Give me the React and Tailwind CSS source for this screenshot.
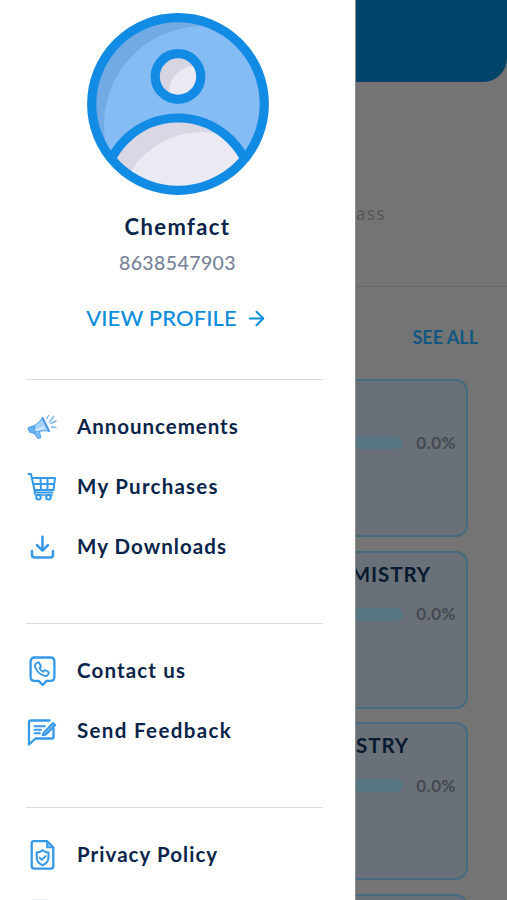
import React from 'react';
import { ArrowRight } from 'lucide-react';

const Avatar = () => (
    <svg viewBox="0 0 182 182" className="w-[182px] h-[182px]">
        <defs>
            <clipPath id="disc">
                <circle cx="91" cy="91" r="87" />
            </clipPath>
            <clipPath id="body">
                <circle cx="91" cy="179.5" r="72" />
            </clipPath>
            <clipPath id="head">
                <circle cx="91" cy="63.5" r="20" />
            </clipPath>
        </defs>
        <g clipPath="url(#disc)">
            <circle cx="91" cy="91" r="87" fill="#72abe3" />
            <circle cx="116" cy="112" r="99" fill="#85bcf3" />
            <g clipPath="url(#body)">
                <rect width="182" height="182" fill="#dad7e4" />
                <circle cx="115" cy="203" r="84" fill="#ebeaf2" />
            </g>
            <circle cx="91" cy="179.5" r="74.5" fill="none" stroke="#128be4" strokeWidth="9.2" />
        </g>
        <circle cx="91" cy="63.5" r="20" fill="#d7d5e2" />
        <circle cx="108" cy="79" r="26" fill="#ebeaf2" clipPath="url(#head)" />
        <circle cx="91" cy="63.5" r="22.8" fill="none" stroke="#128be4" strokeWidth="9.2" />
        <circle cx="91" cy="91" r="86.3" fill="none" stroke="#128be4" strokeWidth="9.2" />
    </svg>
);

const Icon = ({ children }) => (
    <svg viewBox="0 0 30 32" className="w-[30px] h-8 shrink-0" fill="none" stroke="#3598e8" strokeWidth="2.2" strokeLinecap="round" strokeLinejoin="round">
        {children}
    </svg>
);

const MegaphoneIcon = () => (
    <Icon>
        <path d="M2 16.500c5-1 10-4.500 13.500-9.500l6.500 13c-5-1-10.500 0-15.500 2.200z" fill="#a6d2fb" stroke="#67adf0" strokeWidth="1.300" />
        <path d="M5.500 15.500L1 17.500l2 4 3.500.5L9 20.500 7 15z" fill="#65b2f5" stroke="#51a3ed" strokeWidth="1.200" />
        <path d="M15.500 7L22 20" stroke="#4c96e2" strokeWidth="2" />
        <path d="M7 22l4.500 5.500 2.200-1-1.200-5.500" fill="#7fbdf6" stroke="#5ba9ef" strokeWidth="1.300" />
        <path d="M9 19l8-2.500" stroke="#d3e9fd" strokeWidth="2" />
        <path d="M20 7.500l1.500-3M22.500 11l4-5.500M24 12.500l5-2.500M24.500 16l4.500.5" stroke="#78b7f3" strokeWidth="1.400" />
    </Icon>
);

const CartIcon = () => (
    <Icon>
        <path d="M1.500 3H4l4 18.500h17.500M5 7h23l-1.500 12H7.500M6.300 13h21M13.500 7l.5 12M20.500 7v12" strokeWidth="2" />
        <path d="M8 21.500c-1.200 1.500-.3 2.500 1.500 2.500h16" strokeWidth="1.400" />
        <circle cx="11.500" cy="26.300" r="2.300" fill="#fff" strokeWidth="2" />
        <circle cx="21.500" cy="26.300" r="2.300" fill="#fff" strokeWidth="2" />
    </Icon>
);

const DownloadIcon = () => (
    <Icon>
        <path d="M15.500 5.800v13.700M10 14.200l5.500 5.500 5.500-5.500M5 20v3.800c0 1.700 1 2.700 2.700 2.700h15.600c1.700 0 2.700-1 2.700-2.700V20" strokeWidth="2.500" />
    </Icon>
);

const ContactIcon = () => (
    <Icon>
        <path d="M7.500 2.500h16c2.500 0 3.900 1.400 3.900 3.900V22c0 2.500-1.400 3.900-3.900 3.900h-4L15.600 30l-3.900-4.100H7.500c-2.500 0-3.900-1.400-3.900-3.900V6.400c0-2.500 1.400-3.900 3.900-3.900z" strokeWidth="2.300" />
        <path d="M8.700 8.700l2-1.200c.6-.3 1.100-.1 1.400.4l1.700 2.900c.3.600.1 1.100-.4 1.500l-.9.700c.7 1.900 1.900 3 3.700 3.700l.9-1.100c.4-.5.900-.6 1.400-.3l2.900 1.700c.5.300.6.900.3 1.400l-1.100 1.700c-.9 1-2.200 1.100-3.500.6-4.200-1.300-7.500-4.600-8.900-8.700-.4-1.200-.3-2.500.5-3.300z" strokeWidth="1.900" />
    </Icon>
);

const FeedbackIcon = () => (
    <Icon>
        <path d="M22.500 5.500H3.500C2.500 5.500 2 6 2 7v22.500L8.500 23.500H25c1 0 1.500-.5 1.500-1.500v-8.500" strokeWidth="2.300" />
        <path d="M7.500 11.300h10.500M7.500 14.800h6.500M7.500 18.200h5.500" strokeWidth="1.900" />
        <path d="M16.500 17.800l9.500-9.800 2.300 2.200-9.300 9.300-3.500.9z" fill="#85bff3" strokeWidth="1.900" />
    </Icon>
);

const PrivacyIcon = () => (
    <Icon>
        <path d="M20 2.200H7C5.500 2.200 4.700 3 4.700 4.500v22.800c0 1.500.8 2.300 2.300 2.300h17c1.400 0 2.300-.8 2.300-2.300V8.500z" strokeWidth="2.300" />
        <path d="M20 2.200v6.300h6.200z" fill="#85bff3" strokeWidth="1.700" />
        <path d="M15.600 11.300c1.800 1.500 3.700 2.100 5.900 2.300v4.900c0 3.600-2.100 6.100-5.900 7.700-3.800-1.600-5.900-4.100-5.900-7.700v-4.900c2.200-.2 4.100-.8 5.900-2.300z" strokeWidth="2.100" />
        <path d="M12.800 18.800l2 2 3.800-3.700" strokeWidth="1.900" />
    </Icon>
);

// only the top edge shows above the fold
const SheetIcon = () => (
    <Icon>
        <path d="M5.500 1h15" stroke="#dcecf9" strokeWidth="1.500" />
    </Icon>
);

const sections = [
    [
        { label: 'Announcements', icon: MegaphoneIcon, tracking: 'tracking-[0.97px]' },
        { label: 'My Purchases', icon: CartIcon, tracking: 'tracking-[1.25px]' },
        { label: 'My Downloads', icon: DownloadIcon, tracking: 'tracking-[1.05px]' },
    ],
    [
        { label: 'Contact us', icon: ContactIcon, tracking: 'tracking-[1.15px]' },
        { label: 'Send Feedback', icon: FeedbackIcon, tracking: 'tracking-[1.35px]' },
    ],
    [
        { label: 'Privacy Policy', icon: PrivacyIcon, tracking: 'tracking-[1.05px]' },
        { label: '', icon: SheetIcon, tracking: '' },
    ],
];

const CourseCard = ({ title, pad, progress }) => (
    <div className="h-[158px] w-[112px] shrink-0 rounded-r-[12px] border-2 border-l-0 border-[#456b80] bg-[#6a7077]">
        <div className={`flex h-[43px] items-center justify-end text-[20.5px] font-bold tracking-[0.9px] text-[#071a31] ${pad}`}>
            <span className="whitespace-nowrap">{title}</span>
        </div>
        {progress && (
            <div className="flex h-[37px] items-center justify-between pr-[10px]">
                <div className="h-[13px] w-[47px] rounded-r-full bg-[#587583]" />
                <span className="text-[17px] font-bold tracking-[0.5px] text-[#454a52]">{progress}</span>
            </div>
        )}
    </div>
);

export default function App() {
    return (
        <div className="flex h-[900px] w-[507px] overflow-hidden bg-[#747474] font-['Lato',sans-serif]">
            {/* Drawer */}
            <aside className="flex h-full w-[355px] shrink-0 flex-col overflow-hidden bg-white">
                <div className="flex h-[379px] shrink-0 flex-col items-center pt-[13px]">
                    <Avatar />
                    <h2 className="mt-[17px] text-[22px] leading-[30px] font-bold tracking-[1.4px] text-[#09244a]">Chemfact</h2>
                    <p className="mt-[7px] text-[19.5px] leading-[28px] font-medium tracking-[0.4px] text-[#78839b]">8638547903</p>
                    <button className="mt-[25px] flex items-center gap-2 pr-px text-[22px] leading-[32px] font-medium text-[#0f8ddd]">
                        <span className="tracking-[0.1px]">VIEW PROFILE</span>
                        <ArrowRight size={23} strokeWidth={2.1} />
                    </button>
                </div>
                {sections.map((items, i) => (
                    <div key={i} className="shrink-0 px-[26px]">
                        <div className="h-px w-[297px] bg-[#d9dce0]" />
                        <nav className="pt-[17px] pb-[46px]">
                            {items.map(({ label, icon: ItemIcon, tracking }, j) => (
                                <a key={j} className="flex h-[60px] items-center gap-5 pl-px text-[#09244a]">
                                    <ItemIcon />
                                    <span className={`pb-[2px] text-[20.5px] font-bold whitespace-nowrap ${tracking}`}>{label}</span>
                                </a>
                            ))}
                        </nav>
                    </div>
                ))}
            </aside>

            {/* Dimmed page behind */}
            <main className="flex h-full w-[152px] shrink-0 flex-col overflow-hidden border-l border-[#8b8b8b]">
                <div className="h-[82px] shrink-0 rounded-br-[24px] bg-[#004469]" />
                <div className="h-[205px] shrink-0 border-b border-[#686868] pt-[118px]">
                    <span className="text-[19px] leading-[26px] tracking-[1.3px] text-[#55585c]">ass</span>
                </div>
                <div className="flex h-[92px] shrink-0 items-center justify-end pt-[9px] pr-[29px] text-[18px] font-bold text-[#125782]">
                    SEE ALL
                </div>
                <div className="flex flex-col gap-[13.5px]">
                    <CourseCard title="" pad="pr-0" progress="0.0%" />
                    <CourseCard title="MISTRY" pad="pr-[35px]" progress="0.0%" />
                    <CourseCard title="STRY" pad="pr-[57px]" progress="0.0%" />
                    <CourseCard title="" pad="pr-0" />
                </div>
            </main>
        </div>
    );
}
